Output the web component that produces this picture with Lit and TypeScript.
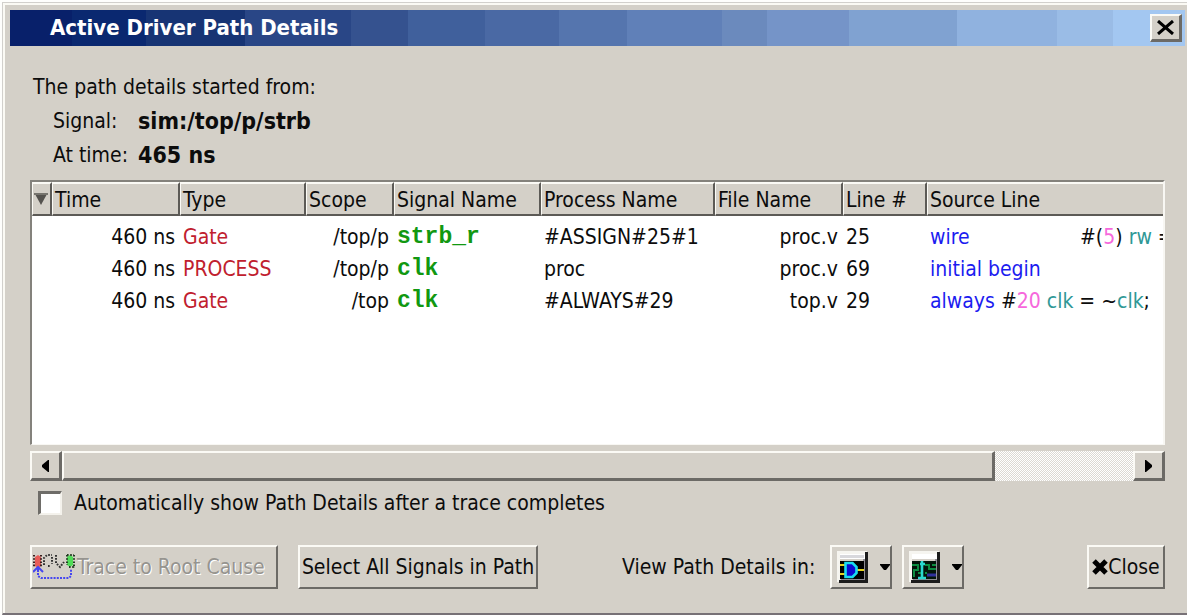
import { LitElement, html, css, svg } from "lit";
import { customElement, property } from "lit/decorators.js";

type Token = { text: string; kind: "keyword" | "number" | "name" | "plain" };

interface PathRow {
  time: string;
  type: string;
  scope: string;
  signal: string;
  process: string;
  file: string;
  line: number;
  source: Token[];
}

const rows: PathRow[] = [
  {
    time: "460 ns", type: "Gate", scope: "/top/p", signal: "strb_r",
    process: "#ASSIGN#25#1", file: "proc.v", line: 25,
    source: [
      { text: "wire", kind: "keyword" },
      { text: "\t#(", kind: "plain" },
      { text: "5", kind: "number" },
      { text: ") ", kind: "plain" },
      { text: "rw", kind: "name" },
      { text: " =", kind: "plain" },
    ],
  },
  {
    time: "460 ns", type: "PROCESS", scope: "/top/p", signal: "clk",
    process: "proc", file: "proc.v", line: 69,
    source: [{ text: "initial begin", kind: "keyword" }],
  },
  {
    time: "460 ns", type: "Gate", scope: "/top", signal: "clk",
    process: "#ALWAYS#29", file: "top.v", line: 29,
    source: [
      { text: "always", kind: "keyword" },
      { text: " #", kind: "plain" },
      { text: "20", kind: "number" },
      { text: " ", kind: "plain" },
      { text: "clk", kind: "name" },
      { text: " = ~", kind: "plain" },
      { text: "clk", kind: "name" },
      { text: ";", kind: "plain" },
    ],
  },
];

const traceIcon = html`<svg width="42" height="26" viewBox="0 0 42 26" aria-hidden="true">
  <path d="M2 3l3-2 3 2v9l-3 2-3-2z" fill="#e85c58" />
  <path d="M1 1v12M8 1v12" stroke="#3a2020" stroke-width="2" stroke-dasharray="1.6 1.6" />
  <path d="M11 11V4l3-3h5M15 12h3M19 3v7M23 1v8l4 4 4-5" fill="none" stroke="#333" stroke-width="2" stroke-dasharray="1.7 1.4" />
  <path d="M34 3l3-2 3 2v8l-3 2-3-2z" fill="#50dc58" />
  <path d="M34 1v10M41 1v13M34 1h7M36 13h5" stroke="#203a20" stroke-width="2" stroke-dasharray="1.6 1.6" />
  <path d="M0 18l5-5 5 5M5 14v4" fill="none" stroke="#4646f0" stroke-width="2" />
  <path d="M5 19v3l3 2h28l2-2v-7" fill="none" stroke="#4646f0" stroke-width="2" stroke-dasharray="2 1.2" />
</svg>`;

const frame = svg`
  <path d="M0 0h31v31H0z" fill="#d4d0c8" />
  <path d="M0 0h30v3H3v28H0z" fill="#f6f5f0" />
  <path d="M28 1h3v31H2v-3h26z" fill="#1c1c1c" />
  <path d="M26 8h2v21H4v-1h22z" fill="#8e8c94" />
  <path d="M3 3h25v5H3z" fill="#fff" />`;

const schematicIcon = html`<svg width="31" height="32" viewBox="0 0 31 32" aria-hidden="true">
  ${frame}
  <path d="M3 4h24v3H3z" fill="#d8d8dc" />
  <path d="M3 10h24v18H3z" fill="#000" />
  <path d="M3 14h6M3 23h6M19 19h8" stroke="#e6d21c" stroke-width="2" />
  <path d="M8.5 12h7l4 4v6l-4 4h-7z" fill="#0a0ad0" stroke="#18dcf0" stroke-width="2.6" />
</svg>`;

const waveIcon = html`<svg width="31" height="32" viewBox="0 0 31 32" aria-hidden="true">
  ${frame}
  <path d="M3 10h24v18H3z" fill="#03140a" />
  <path d="M3 14h6v5H5v7M9 22h3M16 14h4v4h7M18 22h-2M23 14h4" fill="none" stroke="#0c8c40" stroke-width="2" />
  <path d="M18 24h9" stroke="#30309c" stroke-width="3" />
  <path d="M13 10v18M9 27h8M11 13h5" stroke="#2ad8d0" stroke-width="2.6" />
</svg>`;

const dropArrow = html`<svg width="10" height="6" viewBox="0 0 10 6" aria-hidden="true"><path d="M0 0h10v1L6 6H4L0 1z" fill="#000" /></svg>`;

@customElement("app-root")
export class AppRoot extends LitElement {
  @property({ attribute: false }) rows: PathRow[] = rows;

  static styles = css`
    :host {
      display: block;
      box-sizing: border-box;
      min-height: 100vh;
      padding: 2px 0 0 2px;
      background: #fefefc;
      color: #0c0c0c;
      font: 21px/32px "DejaVu Sans Condensed", "Noto Sans", sans-serif;
    }
    *, *::before { box-sizing: border-box; }
    .dialog {
      min-height: calc(100vh - 2px);
      padding: 4px 2px 0 4px;
      background: #d4d0c8;
      border: solid;
      border-width: 1px 0 2px 1px;
      border-color: #d2d0cc #d4d0c8 #777176 #d2d0cc;
      box-shadow: inset 3px 3px 0 -1px #fbfaf4;
    }
    .titlebar {
      display: flex;
      align-items: center;
      justify-content: space-between;
      height: 36px;
      margin: 3px 0 0 3px;
      padding: 0 3px 0 40px;
      background: linear-gradient(to right,
        #08206a 0 5.3%, #0a2870 0 11.6%, #173474 0 20%, #294686 0 29%,
        #35528f 0 33.9%, #40609c 0 40.4%, #4a69a4 0 46.7%, #5575ae 0 52.5%,
        #6080b8 0 60.6%, #6b8abd 0 64.4%, #7594c8 0 71.4%, #80a2d1 0 80.6%,
        #90b2df 0 89.1%, #9abce6 0 93.9%, #a3c7f1 0);
    }
    .title {
      margin: 0;
      color: #fff;
      font-size: 22px;
      line-height: 36px;
      font-weight: bold;
    }
    button {
      margin: 0;
      padding: 0;
      font: inherit;
      color: inherit;
      background: #d4d0c8;
      border: 2px solid;
      border-color: #fbfaf5 #6c6a66 #6c6a66 #fbfaf5;
      border-radius: 0;
      display: flex;
      align-items: center;
      justify-content: center;
      white-space: nowrap;
    }
    .dismiss { width: 32px; height: 28px; border-right-width: 3px; border-bottom-width: 3px; }
    .body { padding: 24px 20px 22px 23px; }
    .intro { margin: 0; padding-left: 3px; line-height: 34px; }
    .facts {
      display: grid;
      grid-template-columns: 85px 1fr;
      margin: 0 0 8px;
      padding-left: 23px;
      line-height: 34px;
    }
    .facts dt, .facts dd { margin: 0; }
    .facts dd { font-size: 23px; font-weight: bold; }
    .list {
      height: 265px;
      overflow: hidden;
      background: #fff;
      border: solid;
      border-width: 2px 2px 1px 2px;
      border-color: #84827c #f8f7f3 #f8f7f3 #84827c;
    }
    table { width: 100%; table-layout: fixed; border-collapse: separate; border-spacing: 0; }
    th, td { padding: 0 5px 0 3px; text-align: left; font-weight: normal; white-space: nowrap; overflow: hidden; line-height: 32px; }
    th {
      height: 34px;
      padding: 2px 0 0 2px;
      line-height: 28px;
      background: #d4d0c8;
      border: solid;
      border-width: 2px 2px 2px 1px;
      border-color: #fbfaf5 #5c5a56 #5c5a56 #fbfaf5;
    }
    th:last-child { border-right: 0; }
    .marker { padding: 0 0 0 1px; }
    .marker svg { display: block; }
    .c-mark { width: 20px; }
    .c-time { width: 128px; }
    .c-type { width: 126px; }
    .c-scope { width: 88px; }
    .c-signal { width: 147px; }
    .c-process { width: 174px; }
    .c-file { width: 128px; }
    .c-line { width: 84px; }
    tbody::before { content: ""; display: block; height: 5px; }
    .right { text-align: right; }
    .type { color: #c0202e; }
    .signal { color: #119811; font: bold 23px/32px "Liberation Mono", monospace; }
    .source { padding-right: 0; white-space: pre; tab-size: 150px; text-overflow: clip; }
    .keyword { color: #1c1cf0; }
    .number { color: #f668dc; }
    .name { color: #2f9896; }
    .scrollbar { display: flex; height: 30px; margin-top: 6px; }
    .scrollbar button { border-right-width: 3px; border-bottom-width: 3px; }
    .step { width: 32px; flex: none; }
    .track {
      flex: 1;
      display: flex;
      background: repeating-conic-gradient(#fff 0 25%, #dcd9d2 0 50%) 0 0 / 2px 2px;
    }
    .thumb { width: 87.1%; }
    .option { display: flex; align-items: center; gap: 12px; margin-top: 9px; padding-left: 8px; height: 26px; }
    .option input {
      appearance: none;
      width: 24px;
      height: 24px;
      margin: 0;
      background: #fff;
      border: solid;
      border-width: 3px 2px 2px 3px;
      border-color: #6e6c68 #f4f2ec #f4f2ec #6e6c68;
    }
    .actions { display: flex; align-items: center; margin-top: 29px; }
    .actions button { height: 44px; }
    .trace { width: 248px; justify-content: flex-start; padding-left: 1px; gap: 2px; }
    .trace:disabled { color: #96948f; text-shadow: 1px 1px 0 #fff; }
    .select { width: 240px; margin-left: 20px; }
    .views { display: flex; align-items: center; gap: 10px; margin-left: 84px; white-space: nowrap; }
    .views span { margin-right: 5px; }
    .views button { width: 62px; gap: 12px; padding-left: 5px; }
    .close { width: 78px; margin-left: auto; }
  `;

  render() {
    return html`
      <main class="dialog">
        <header class="titlebar">
          <h1 class="title">Active Driver Path Details</h1>
          <button class="dismiss" aria-label="Close window">
            <svg width="17" height="15" viewBox="0 0 17 15" aria-hidden="true"><path d="M1 1l15 13M16 1L1 14" stroke="#000" stroke-width="3" /></svg>
          </button>
        </header>
        <div class="body">
          <p class="intro">The path details started from:</p>
          <dl class="facts">
            <dt>Signal:</dt><dd>sim:/top/p/strb</dd>
            <dt>At time:</dt><dd>465 ns</dd>
          </dl>
          <div class="list">
            <table>
              <colgroup>
                <col class="c-mark" /><col class="c-time" /><col class="c-type" /><col class="c-scope" />
                <col class="c-signal" /><col class="c-process" /><col class="c-file" /><col class="c-line" /><col />
              </colgroup>
              <thead>
                <tr>
                  <th class="marker" aria-label="Sort">
                    <svg width="14" height="13" viewBox="0 0 14 13"><path d="M1 1h12L7 12z" fill="#55534f" /><path d="M0 1h14" stroke="#77756f" stroke-width="2" /></svg>
                  </th>
                  <th>Time</th><th>Type</th><th>Scope</th><th>Signal Name</th>
                  <th>Process Name</th><th>File Name</th><th>Line #</th><th>Source Line</th>
                </tr>
              </thead>
              <tbody>
                ${this.rows.map((r) => html`<tr>
                  <td></td>
                  <td class="right">${r.time}</td>
                  <td class="type">${r.type}</td>
                  <td class="right">${r.scope}</td>
                  <td class="signal">${r.signal}</td>
                  <td>${r.process}</td>
                  <td class="right">${r.file}</td>
                  <td>${r.line}</td>
                  <td class="source">${r.source.map((t) => html`<span class=${t.kind}>${t.text}</span>`)}</td>
                </tr>`)}
              </tbody>
            </table>
          </div>
          <div class="scrollbar">
            <button class="step" aria-label="Scroll left"><svg width="7" height="12" viewBox="0 0 7 12"><path d="M7 0v12H6L0 7V5l6-5z" /></svg></button>
            <div class="track"><button class="thumb" aria-label="Scroll position"></button></div>
            <button class="step" aria-label="Scroll right"><svg width="7" height="12" viewBox="0 0 7 12"><path d="M0 0v12h1l6-5V5L1 0z" /></svg></button>
          </div>
          <div class="option">
            <input type="checkbox" id="auto" />
            <label for="auto">Automatically show Path Details after a trace completes</label>
          </div>
          <div class="actions">
            <button class="trace" disabled>${traceIcon}Trace to Root Cause</button>
            <button class="select">Select All Signals in Path</button>
            <div class="views">
              <span>View Path Details in:</span>
              <button aria-label="Schematic view">${schematicIcon}${dropArrow}</button>
              <button aria-label="Wave view">${waveIcon}${dropArrow}</button>
            </div>
            <button class="close"><svg width="16" height="16" viewBox="0 0 16 16" aria-hidden="true"><path d="M2 2l12 12M14 2L2 14" stroke="#000" stroke-width="5" /></svg>Close</button>
          </div>
        </div>
      </main>
    `;
  }
}
